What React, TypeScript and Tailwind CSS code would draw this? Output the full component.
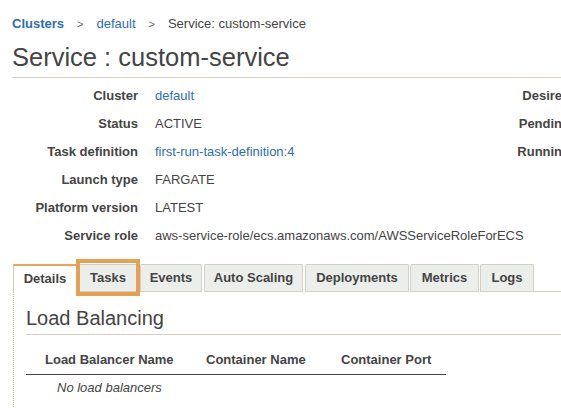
import React from "react";

const rows: { label: string; value: string; link?: boolean }[] = [
  { label: "Cluster", value: "default", link: true },
  { label: "Status", value: "ACTIVE" },
  { label: "Task definition", value: "first-run-task-definition:4", link: true },
  { label: "Launch type", value: "FARGATE" },
  { label: "Platform version", value: "LATEST" },
  { label: "Service role", value: "aws-service-role/ecs.amazonaws.com/AWSServiceRoleForECS" },
];

const counts = ["Desired count", "Pending count", "Running count"];

const tabs: { name: string; w: string; ml: string }[] = [
  { name: "Tasks", w: "w-[62px]", ml: "ml-[1px]" },
  { name: "Events", w: "w-[62px]", ml: "ml-[1px]" },
  { name: "Auto Scaling", w: "w-[99px]", ml: "ml-[2px]" },
  { name: "Deployments", w: "w-[104px]", ml: "ml-[2px]" },
  { name: "Metrics", w: "w-[69px]", ml: "ml-[1px]" },
  { name: "Logs", w: "w-[54px]", ml: "ml-[1px]" },
];

export default function App() {
  return (
    <div
      className="h-[408px] w-[561px] overflow-hidden bg-white text-[13px] text-[#444]"
      style={{ fontFamily: '"Liberation Sans", Arial, sans-serif' }}
    >
      {/* breadcrumb */}
      <div className="flex h-[44px] items-center gap-[13px] px-3 pt-[4px]">
        <a className="font-bold text-[#2d6eb4]">Clusters</a>
        <span className="text-[11px] text-[#666]">&gt;</span>
        <a className="text-[#2d6eb4]">default</a>
        <span className="text-[11px] text-[#666]">&gt;</span>
        <span>Service: custom-service</span>
      </div>

      <div className="ml-3 border-b border-[#d8d0c4] pb-[7px]">
        <h1 className="text-[25.5px] leading-[26px] text-[#444]">Service : custom-service</h1>
      </div>

      {/* details */}
      <div className="mt-[4px] flex w-[700px] px-3">
        <div className="w-[468px]">
          {rows.map((r) => (
            <div key={r.label} className="flex h-[28px] items-center whitespace-nowrap">
              <div className="w-[126px] shrink-0 text-right font-bold">{r.label}</div>
              <div className={`pl-[17px] ${r.link ? "text-[#2d6eb4]" : ""}`}>{r.value}</div>
            </div>
          ))}
        </div>
        <div>
          {counts.map((c) => (
            <div key={c} className="flex h-[28px] items-center whitespace-nowrap">
              <div className="w-[129px] text-right font-bold">{c}</div>
            </div>
          ))}
        </div>
      </div>

      {/* tabs */}
      <div className="mt-[14px] flex items-end pl-[13px]">
        <div className="flex h-[28px] w-[63px] items-center justify-center border-l border-t-2 border-[#cfc7bb] border-t-[#e6a35c] bg-white font-bold">
          Details
        </div>
        {tabs.map((t) => (
          <div key={t.name} className={`flex items-end border-b border-[#d5cfc5] ${t.ml}`}>
            <div
              className={`relative flex h-[27px] items-center justify-center rounded-t-[2px] border border-b-0 border-[#d3cec6] bg-[#eceeec] font-bold ${t.w}`}
            >
              {t.name}
              {t.name === "Tasks" && (
                <span className="absolute -top-[6px] -right-[2px] -bottom-[5px] -left-[2px] border-4 border-[#e5a152]" />
              )}
            </div>
          </div>
        ))}
        <div className="flex-1 border-b border-[#d5cfc5]" />
      </div>

      {/* tab content */}
      <div className="ml-[13px] border-l border-dotted border-[#cbbfae] pb-6 pl-3">
        <div className="border-b border-[#d8d0c4] pb-[5px] pt-[15px]">
          <h2 className="text-[20px] leading-[22px]">Load Balancing</h2>
        </div>
        <table className="mt-[15px] w-[420px] table-fixed border-collapse text-left">
          <thead>
            <tr className="border-b-[1.5px] border-[#4a4444]">
              <th className="w-[162px] pb-[4px] pl-[19px] font-bold whitespace-nowrap">Load Balancer Name</th>
              <th className="w-[134px] pb-[4px] pl-[18px] font-bold whitespace-nowrap">Container Name</th>
              <th className="w-[124px] pb-[4px] pl-[19px] font-bold whitespace-nowrap">Container Port</th>
            </tr>
          </thead>
          <tbody>
            <tr>
              <td colSpan={3} className="pl-[31px] pt-[3px] italic">
                No load balancers
              </td>
            </tr>
          </tbody>
        </table>
      </div>
    </div>
  );
}
